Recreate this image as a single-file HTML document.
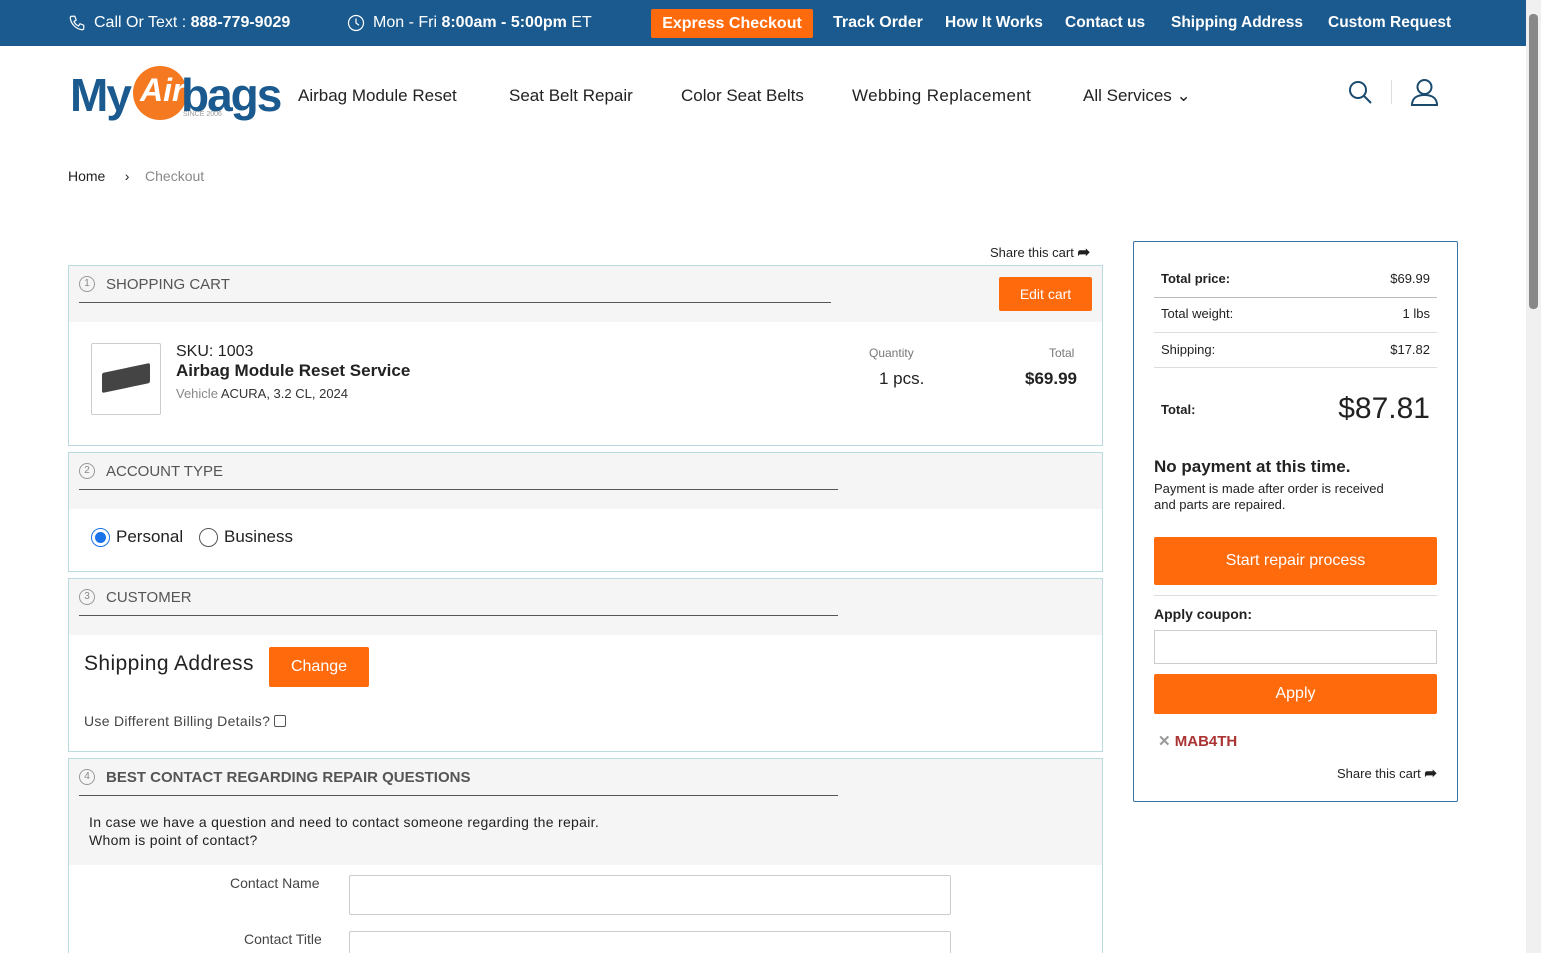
<!DOCTYPE html>
<html><head><meta charset="utf-8"><style>
*{box-sizing:border-box;margin:0;padding:0}
html,body{width:1541px;height:953px;overflow:hidden}
body{position:relative;background:#fff;font-family:"Liberation Sans",sans-serif;color:#222}
.a{position:absolute;white-space:nowrap}
.top{position:absolute;left:0;top:0;width:1526px;height:46px;background:#1a5a8e;color:#fff;font-size:16px}
.top .n{position:absolute;top:14px;font-weight:bold;font-size:16px}
.btn{position:absolute;background:#ff6a0c;color:#fff;text-align:center;border-radius:2px}
.box{position:absolute;left:68px;width:1035px;border:1px solid #b9dbe0;background:#fff;overflow:hidden}
.hd{position:absolute;left:0;right:0;top:0;background:#f5f5f5}
.ttl{position:absolute;left:37px;font-size:15px;color:#555}
.num{position:absolute;left:10px;width:16px;height:16px;border:1px solid #999;border-radius:50%;font-size:10px;text-align:center;line-height:14px;color:#888}
.ln{position:absolute;left:10px;height:1px;background:#555}
.row{position:absolute;left:20px;right:20px;font-size:13px;border-bottom:1px solid #ddd}
.row .l{position:absolute;left:7px}
</style></head><body>
<div class="top">
<svg class="a" style="left:68px;top:14px" width="18" height="18" viewBox="0 0 24 24" fill="none" stroke="#fff" stroke-width="1.6"><path d="M5 3h4l2 5-3 2a11 11 0 0 0 6 6l2-3 5 2v4a2 2 0 0 1-2 2A18 18 0 0 1 3 5a2 2 0 0 1 2-2z"/></svg>
<div class="a" style="left:94px;top:14px">Call Or Text : <b>888-779-9029</b></div>
<svg class="a" style="left:347px;top:14px" width="18" height="18" viewBox="0 0 24 24" fill="none" stroke="#fff" stroke-width="1.6"><circle cx="12" cy="12" r="10"/><path d="M12 6v6l4 3"/></svg>
<div class="a" style="left:373px;top:14px">Mon - Fri <b>8:00am - 5:00pm</b> ET</div>
<div class="btn" style="left:651px;top:9px;width:162px;height:29px;line-height:29px;font-size:16px;font-weight:bold">Express Checkout</div>
<div class="n a" style="left:833px">Track Order</div>
<div class="n a" style="left:945px;font-size:15.5px">How It Works</div>
<div class="n a" style="left:1065px;font-size:15.5px">Contact us</div>
<div class="n a" style="left:1171px;font-size:15.5px">Shipping Address</div>
<div class="n a" style="left:1328px;font-size:15.5px">Custom Request</div>
</div>
<div class="a" style="left:1526px;top:0;width:15px;height:953px;background:#f0f0f0"></div>
<div class="a" style="left:1529px;top:14px;width:9px;height:295px;background:#888;border-radius:4px"></div>
<!-- logo -->
<div class="a" style="left:70px;top:68px;font-size:46px;font-weight:bold;color:#1a5a8e;letter-spacing:-2px">My</div>
<div class="a" style="left:133px;top:66px;width:54px;height:54px;border-radius:50%;background:#f47920"></div>
<div class="a" style="left:140px;top:72px;font-size:32px;font-weight:bold;color:#fff;font-style:italic">Air</div>
<div class="a" style="left:181px;top:68px;font-size:46px;font-weight:bold;color:#1a5a8e;letter-spacing:-2px">bags</div>
<div class="a" style="left:183px;top:111px;font-size:7px;color:#999">SINCE 2006</div>
<div class="a" style="left:298px;top:86px;font-size:17px;color:#222">Airbag Module Reset</div>
<div class="a" style="left:509px;top:86px;font-size:17px">Seat Belt Repair</div>
<div class="a" style="left:681px;top:86px;font-size:17px">Color Seat Belts</div>
<div class="a" style="left:852px;top:86px;font-size:17px;letter-spacing:.4px">Webbing Replacement</div>
<div class="a" style="left:1083px;top:86px;font-size:17px">All Services ⌄</div>
<svg class="a" style="left:1347px;top:79px" width="26" height="26" viewBox="0 0 26 26" fill="none" stroke="#1a4a6e" stroke-width="2"><circle cx="11" cy="11" r="8"/><path d="M17 17l7 7"/></svg>
<div class="a" style="left:1391px;top:80px;width:1px;height:24px;background:#ddd"></div>
<svg class="a" style="left:1410px;top:78px" width="29" height="28" viewBox="0 0 29 28" fill="none" stroke="#1a4a6e" stroke-width="2"><circle cx="14.5" cy="9" r="7"/><path d="M2 27c0-7 5-10 12.5-10S27 20 27 27z"/></svg>
<div class="a" style="left:68px;top:168px;font-size:14px">Home&nbsp;&nbsp;&nbsp;&nbsp; › &nbsp;&nbsp;&nbsp;<span style="color:#888">Checkout</span></div>
<div class="a" style="left:990px;top:243px;font-size:13px">Share this cart <b style="font-size:15px">➦</b></div>
<!-- box1 -->
<div class="box" style="top:265px;height:181px">
<div class="hd" style="height:56px"></div>
<div class="num" style="top:10px">1</div><div class="ttl" style="top:10px">SHOPPING CART</div>
<div class="ln" style="top:36px;width:752px"></div>
<div class="btn" style="left:930px;top:11px;width:93px;height:34px;line-height:34px;font-size:14px">Edit cart</div>
<div class="a" style="left:22px;top:77px;width:70px;height:72px;border:1px solid #ccc;border-radius:2px"><div style="margin:24px 10px;width:48px;height:20px;background:#444;transform:skewY(-12deg);border-radius:2px"></div></div>
<div class="a" style="left:107px;top:77px;font-size:16px">SKU: 1003</div>
<div class="a" style="left:107px;top:95px;font-size:17px;font-weight:bold">Airbag Module Reset Service</div>
<div class="a" style="left:107px;top:120px;font-size:13px;color:#888">Vehicle <span style="color:#333">ACURA, 3.2 CL, 2024</span></div>
<div class="a" style="left:800px;top:80px;font-size:12px;color:#777">Quantity</div>
<div class="a" style="left:810px;top:103px;font-size:17px">1 pcs.</div>
<div class="a" style="left:980px;top:80px;font-size:12px;color:#777">Total</div>
<div class="a" style="left:956px;top:103px;font-size:17px;font-weight:bold">$69.99</div>
</div>
<!-- box2 -->
<div class="box" style="top:452px;height:120px">
<div class="hd" style="height:56px"></div>
<div class="num" style="top:10px">2</div><div class="ttl" style="top:10px">ACCOUNT TYPE</div>
<div class="ln" style="top:36px;width:759px"></div>
<div class="a" style="left:22px;top:75px;width:19px;height:19px;border:1px solid #1a73e8;border-radius:50%"><div style="margin:3px;width:11px;height:11px;border-radius:50%;background:#1a73e8"></div></div>
<div class="a" style="left:47px;top:74px;font-size:17px">Personal</div>
<div class="a" style="left:130px;top:75px;width:19px;height:19px;border:1px solid #555;border-radius:50%"></div>
<div class="a" style="left:155px;top:74px;font-size:17px">Business</div>
</div>
<!-- box3 -->
<div class="box" style="top:578px;height:174px">
<div class="hd" style="height:56px"></div>
<div class="num" style="top:10px">3</div><div class="ttl" style="top:10px">CUSTOMER</div>
<div class="ln" style="top:36px;width:759px"></div>
<div class="a" style="left:15px;top:73px;font-size:21px;letter-spacing:.4px">Shipping Address</div>
<div class="btn" style="left:200px;top:68px;width:100px;height:40px;line-height:40px;font-size:16px">Change</div>
<div class="a" style="left:15px;top:134px;font-size:14px;color:#444;letter-spacing:.3px">Use Different Billing Details? <span style="display:inline-block;width:12px;height:12px;border:1px solid #555;border-radius:2px;vertical-align:-1px"></span></div>
</div>
<!-- box4 -->
<div class="box" style="top:758px;height:210px">
<div class="hd" style="height:106px"></div>
<div class="num" style="top:10px">4</div><div class="ttl" style="top:10px;font-weight:bold">BEST CONTACT REGARDING REPAIR QUESTIONS</div>
<div class="ln" style="top:36px;width:759px"></div>
<div class="a" style="left:20px;top:54px;font-size:14px;line-height:18px;letter-spacing:.3px">In case we have a question and need to contact someone regarding the repair.<br>Whom is point of contact?</div>
<div class="a" style="left:161px;top:116px;font-size:14px;color:#444">Contact Name</div>
<div class="a" style="left:280px;top:116px;width:602px;height:40px;border:1px solid #ccc;border-radius:2px"></div>
<div class="a" style="left:175px;top:172px;font-size:14px;color:#444">Contact Title</div>
<div class="a" style="left:280px;top:172px;width:602px;height:40px;border:1px solid #ccc;border-radius:2px"></div>
</div>
<!-- sidebar -->
<div class="a" style="left:1133px;top:241px;width:325px;height:561px;border:1px solid #3a75a5;border-radius:2px">
<div class="row" style="top:18px;height:38px;border-color:#bbb"><b class="l" style="top:11px">Total price:</b><span style="position:absolute;right:7px;top:11px">$69.99</span></div>
<div class="row" style="top:56px;height:35px"><span class="l" style="top:8px">Total weight:</span><span style="position:absolute;right:7px;top:8px">1 lbs</span></div>
<div class="row" style="top:91px;height:35px"><span class="l" style="top:9px">Shipping:</span><span style="position:absolute;right:7px;top:9px">$17.82</span></div>
<div class="a" style="left:27px;top:160px;font-size:13px;font-weight:bold">Total:</div>
<div class="a" style="right:27px;top:150px;font-size:30px">$87.81</div>
<div class="a" style="left:20px;top:215px;font-size:17px;font-weight:bold">No payment at this time.</div>
<div class="a" style="left:20px;top:239px;font-size:13px;line-height:16px">Payment is made after order is received<br>and parts are repaired.</div>
<div class="btn" style="left:20px;top:295px;width:283px;height:48px;line-height:48px;font-size:16px">Start repair process</div>
<div class="a" style="left:20px;top:353px;width:283px;height:1px;background:#ddd"></div>
<div class="a" style="left:20px;top:364px;font-size:14px;font-weight:bold">Apply coupon:</div>
<div class="a" style="left:20px;top:388px;width:283px;height:34px;border:1px solid #ccc"></div>
<div class="btn" style="left:20px;top:432px;width:283px;height:40px;line-height:40px;font-size:16px">Apply</div>
<div class="a" style="left:24px;top:490px;font-size:15px;font-weight:bold;color:#a33"><span style="color:#999">✕</span> MAB4TH</div>
<div class="a" style="right:20px;top:522px;font-size:13px">Share this cart <b style="font-size:15px">➦</b></div>
</div>
</body></html>
